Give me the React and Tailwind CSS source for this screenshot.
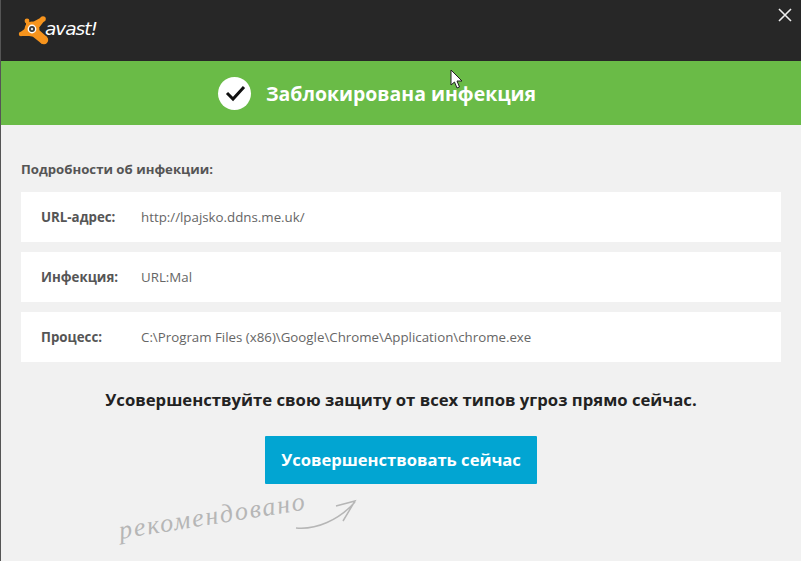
const rows = [
  { label: 'URL-адрес:', value: 'http://lpajsko.ddns.me.uk/' },
  { label: 'Инфекция:', value: 'URL:Mal' },
  { label: 'Процесс:', value: 'C:\\Program Files (x86)\\Google\\Chrome\\Application\\chrome.exe' },
];

function AvastLogo() {
  return (
    <div className="flex items-center">
      <svg width="34" height="34" viewBox="0 0 34 34" className="-mr-[7px]">
        <g fill="#f7941d">
          <circle cx="14" cy="16" r="7.5" />
          <circle cx="9" cy="8" r="2.4" />
          <circle cx="3" cy="21" r="2.2" />
          <circle cx="25" cy="6" r="2.8" />
          <circle cx="26" cy="27" r="4.2" />
          <path d="M8 7 L13 10 L24 4 L27 7 L20 16 L29 24 L24 31 L14 23 L3 23 L2.5 19 L8 15 Z" />
        </g>
        <circle cx="14" cy="16" r="4.4" fill="#fff" />
        <circle cx="14" cy="16" r="3" fill="#3a3a3a" />
        <circle cx="14" cy="16" r="1.2" fill="#ddd" />
      </svg>
      <span className="text-[18.5px] leading-none italic text-white font-['DejaVu_Sans',sans-serif] tracking-[-1px] mb-[1px]">
        avast!
      </span>
    </div>
  );
}

export default function App() {
  return (
    <div className="relative w-[801px] h-[561px] overflow-hidden bg-[#f1f1f1] border-l border-[#555] font-['Open_Sans',sans-serif]">
      <header className="h-[61px] bg-[#272727] flex items-start justify-between pl-[17px] pr-[9px]">
        <div className="mt-[13px]">
          <AvastLogo />
        </div>
        <svg width="14" height="14" viewBox="0 0 14 14" className="mt-[8px]" stroke="#eee" strokeWidth="1.6">
          <path d="M1 1 L13 13 M13 1 L1 13" />
        </svg>
      </header>

      <div className="h-[64px] bg-[#6abb47] flex items-center pl-[217px] gap-[15px]">
        <div className="w-[33px] h-[33px] rounded-full bg-white flex items-center justify-center">
          <svg width="22" height="18" viewBox="0 0 22 18" fill="none" stroke="#111" strokeWidth="3">
            <path d="M3 9 L9 15 L20 3" />
          </svg>
        </div>
        <h1 className="text-[19.45px] font-bold text-white leading-none pt-[2px]">Заблокирована инфекция</h1>
      </div>

      <main className="px-[20px] pt-[36px]">
        <p className="text-[13.2px] font-bold text-[#555] leading-[16px]">Подробности об инфекции:</p>
        <div className="mt-[15px] flex flex-col gap-[10px]">
          {rows.map((row) => (
            <div key={row.label} className="h-[50px] bg-white flex items-center pl-[20px] text-[13.3px]">
              <span className="w-[100px] font-bold text-[#555] pt-[1px]">{row.label}</span>
              <span className="text-[#666] pt-[1px]">{row.value}</span>
            </div>
          ))}
        </div>
        <p className="mt-[27px] text-center text-[16.7px] font-bold text-[#222] leading-[22px]">
          Усовершенствуйте свою защиту от всех типов угроз прямо сейчас.
        </p>
        <div className="mt-[25px] flex justify-center">
          <button className="w-[272px] h-[48px] bg-[#02a5d2] text-white text-[16.6px] font-bold rounded-[1px]">
            Усовершенствовать сейчас
          </button>
        </div>
      </main>

      <span className="absolute left-[118px] top-[518px] -rotate-[9deg] origin-left text-[26px] leading-none italic tracking-[1.9px] text-[#b6b6b6] font-['Liberation_Serif',serif]">
        рекомендовано
      </span>
      <svg width="70" height="40" viewBox="0 0 70 40" fill="none" stroke="#b6b6b6" strokeWidth="1.5" className="absolute left-[290px] top-[498px]">
        <path d="M5 30 C25 32 48 22 64 4 M45 8 L64 3 L52 23" />
      </svg>

      <svg width="14" height="21" viewBox="0 0 14 21" className="absolute left-[449px] top-[69px]">
        <path d="M1 1 L1 16 L4.5 13 L7 19 L9.5 18 L7 12 L12 12 Z" fill="#fff" stroke="#222" strokeWidth="1" />
      </svg>
    </div>
  );
}
